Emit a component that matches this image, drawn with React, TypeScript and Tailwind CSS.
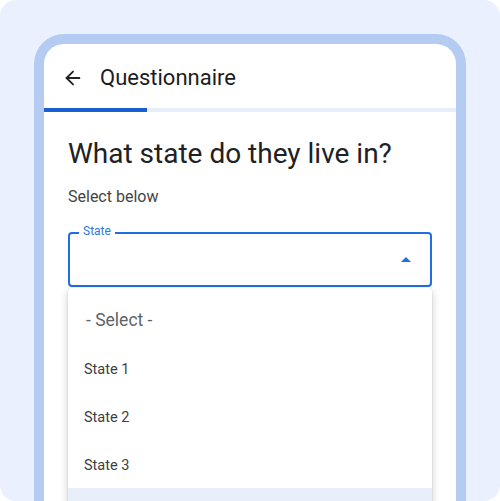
import { ArrowLeft } from "lucide-react";

const options = ["State 1", "State 2", "State 3", "State 4"];

export default function App() {
  return (
    <div className="h-[501px] w-[500px] overflow-hidden bg-white font-['Roboto',sans-serif]">
      <div className="h-[501px] rounded-[16px] bg-[#eaf0fd] px-[34px] pt-[34px]">
        {/* Phone frame */}
        <div className="h-[520px] rounded-t-[30px] bg-[#b4ccf1] px-[10px] pt-[10px]">
          <div className="h-full rounded-t-[20px] bg-white">
            {/* App bar */}
            <div className="flex h-[64px] items-center pl-[18px] pt-[4px]">
              <ArrowLeft className="h-[22px] w-[22px] text-[#222]" strokeWidth={2} aria-hidden="true" />
              <span className="ml-[16px] text-[22px] leading-none text-[#1c1c1c]">Questionnaire</span>
            </div>

            {/* Progress */}
            <div className="h-[4px] w-full bg-[#e8eef9]">
              <div className="h-full w-[103px] bg-[#1a5ed4]" />
            </div>

            <div className="px-[24px] pt-[24px]">
              <h1 className="text-[28px] leading-[36px] text-[#202124]">What state do they live in?</h1>
              <p className="mt-[13px] text-[16px] leading-[24px] text-[#444]">Select below</p>

              {/* Select field */}
              <div className="relative mt-[23px]">
                <div className="flex h-[55px] items-center justify-end rounded-[4px] border-2 border-[#1f6fe3] pr-[12px]">
                  <svg viewBox="0 0 24 24" className="h-[24px] w-[24px] fill-[#1f6fe3]" aria-hidden="true">
                    <path d="m7 14 5-5 5 5z" />
                  </svg>
                </div>
                <span className="absolute left-[11px] top-[-8px] bg-white px-[4px] text-[12px] leading-[14px] text-[#2a78e4]">
                  State
                </span>

                {/* Menu */}
                <div className="mt-px rounded-[4px] bg-white py-[8px] shadow-[0_3px_8px_rgba(0,0,0,0.2),0_0_2px_rgba(0,0,0,0.12)]">
                  <div className="flex h-[48px] items-center pl-[18px] text-[17.5px] text-[#5f6368]">- Select -</div>
                  {options.map((o, i) => (
                    <div
                      key={o}
                      className={
                        i === 3
                          ? "flex h-[48px] items-center bg-[#e8effb] pl-[16px] pt-[3px] text-[14.5px] text-[#3c4043]"
                          : "flex h-[48px] items-center pl-[16px] pt-[3px] text-[14.5px] text-[#3c4043]"
                      }
                    >
                      {o}
                    </div>
                  ))}
                </div>
              </div>
            </div>
          </div>
        </div>
      </div>
    </div>
  );
}
